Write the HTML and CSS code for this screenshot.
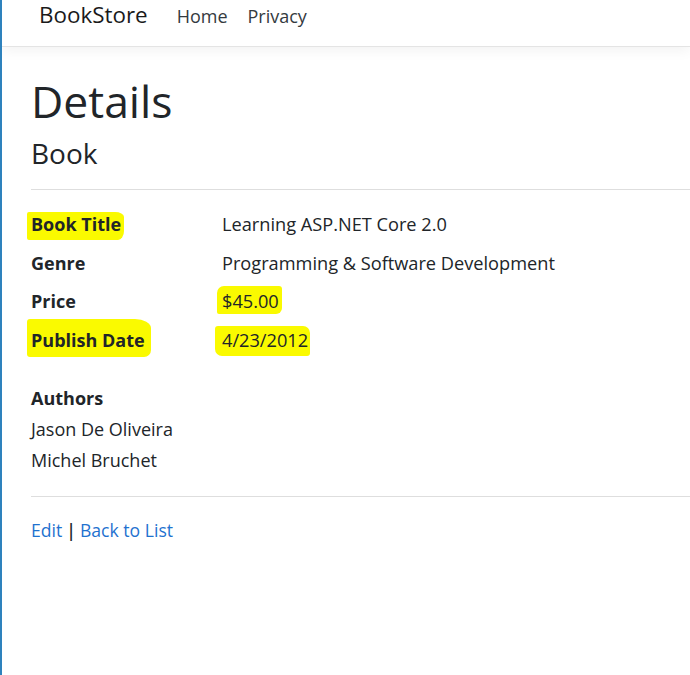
FILE: index.html
```html
<!DOCTYPE html>
<html lang="en">
<head>
<meta charset="utf-8">
<title>Details - BookStore</title>
<link rel="stylesheet" href="styles.css">
</head>
<body>
<header class="navbar">
  <a class="brand" href="#">BookStore</a>
  <a class="nav-link" href="#">Home</a>
  <a class="nav-link" href="#">Privacy</a>
</header>
<main class="content">
  <h1 class="title">Details</h1>
  <h4 class="subtitle">Book</h4>
  <hr class="rule">
  <dl class="details">
    <dt><span class="hl hl-title">Book Title</span></dt>
    <dd>Learning ASP.NET Core 2.0</dd>
    <dt>Genre</dt>
    <dd>Programming &amp; Software Development</dd>
    <dt>Price</dt>
    <dd><span class="hl hl-price">$45.00</span></dd>
    <dt><span class="hl hl-pub">Publish Date</span></dt>
    <dd><span class="hl hl-date">4/23/2012</span></dd>
  </dl>
  <div class="authors">
    <div class="authors-label">Authors</div>
    <div>Jason De Oliveira</div>
    <div>Michel Bruchet</div>
  </div>
  <hr class="rule rule-bottom">
  <div class="actions">
    <a href="#">Edit</a><span class="sep">|</span><a href="#">Back to List</a>
  </div>
</main>
</body>
</html>
```

FILE: styles.css
```css
html, body {
  height: 100%;
}
body {
  margin: 0;
  box-sizing: border-box;
  border-left: 2px solid #2e82bd;
  font-family: "Open Sans", "Noto Sans", sans-serif;
  color: #212529;
  background: #fff;
  overflow: hidden;
}
a {
  text-decoration: none;
}
.navbar {
  display: flex;
  align-items: baseline;
  height: 46px;
  padding-left: 37px;
  border-bottom: 1px solid #e4e4e4;
  box-shadow: 0 4px 12px rgba(0, 0, 0, 0.05);
}
.brand {
  font-size: 22.4px;
  line-height: 30px;
  color: #1a1a1a;
  margin-right: 29px;
}
.nav-link {
  font-size: 18px;
  line-height: 26px;
  color: #343a40;
  margin-right: 20px;
}
.content {
  padding-left: 29px;
}
.title {
  font-size: 44.5px;
  font-weight: 400;
  line-height: 1.2;
  margin: 27px 0 0;
}
.subtitle {
  font-size: 28px;
  font-weight: 400;
  line-height: 1.2;
  margin: 9.5px 0 0;
}
.rule {
  border: 0;
  border-top: 1px solid #dedede;
  margin: 19px 0 0;
}
.details {
  display: grid;
  grid-template-columns: 191px 1fr;
  row-gap: 11.7px;
  margin: 20.5px 0 0;
  font-size: 18px;
  line-height: 27px;
}
.details dt {
  font-weight: 700;
}
.details dd {
  margin: 0;
  font-size: 18.2px;
}
.hl {
  display: inline-block;
  background: #fafa00;
  line-height: 1.3;
}
.hl-title {
  padding: 1px 3px 4px 4px;
  margin: -1px -3px -4px -4px;
  border-radius: 2px 9px 6px 2px / 2px 5px 9px 2px;
}
.hl-price {
  padding: 4px 3px 0 5px;
  margin: -4px -3px 0 -5px;
  border-radius: 7px 3px 6px 2px;
}
.hl-pub {
  padding: 10px 6px 5px 4px;
  margin: -10px -6px -5px -4px;
  border-radius: 3px 16px 7px 3px / 3px 9px 7px 3px;
}
.hl-date {
  padding: 3px 2px 3px 7px;
  margin: -3px -2px -3px -7px;
  border-radius: 3px 7px 3px 7px;
}
.authors {
  margin-top: 29px;
  font-size: 18px;
  line-height: 31px;
}
.authors-label {
  font-weight: 700;
}
.rule-bottom {
  margin-top: 19.5px;
}
.actions {
  margin-top: 20.5px;
  font-size: 17.6px;
  line-height: 27px;
  color: #212529;
}
.actions a {
  color: #1f72cf;
}
.sep {
  margin: 0 4px 0 4px;
  font-weight: 600;
}
```
